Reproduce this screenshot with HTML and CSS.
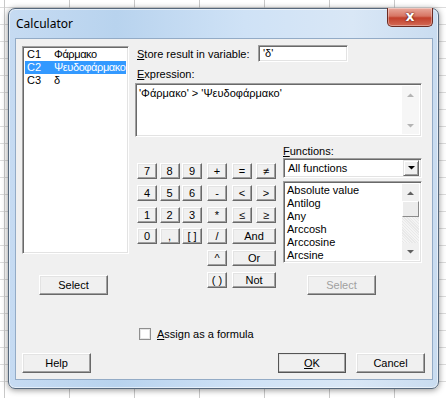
FILE: index.html
```html
<!DOCTYPE html>
<html lang="en">
  <head>
    <meta charset="utf-8">
    <title>Calculator</title>
    <link rel="stylesheet" href="styles.css">
  </head>
  <body>
    <div class="desk">
      <div class="window">
        <div class="titlebar">
          <span class="title">Calculator</span>
          <span class="close">x</span>
        </div>
        <div class="client">
          <div class="main">
            <div class="left">
              <div class="sunken varlist">
                <div class="row"><span class="col">C1</span>Φάρμακο</div>
                <div class="row sel"><span class="col">C2</span>Ψευδοφάρμακο</div>
                <div class="row"><span class="col">C3</span>δ</div>
              </div>
              <button class="btn select-var">Select</button>
            </div>
            <div class="right">
              <div class="store">
                <span class="store-label"><u>S</u>tore result in variable:</span>
                <div class="sunken field">'δ'</div>
              </div>
              <div class="label expr-label"><u>E</u>xpression:</div>
              <div class="sunken expr">
                <div class="expr-text">'Φάρμακο' &gt; 'Ψευδοφάρμακο'</div>
                <div class="vscroll off">
                  <span class="arrow"><svg width="7" height="4"><path d="M0 4L3.5 0.5L7 4Z"/></svg></span>
                  <span class="track"></span>
                  <span class="arrow"><svg width="7" height="4"><path d="M0 0L3.5 3.5L7 0Z"/></svg></span>
                </div>
              </div>
              <div class="lower">
                <div class="keypad">
                  <div class="digits">
                    <button class="btn key">7</button>
                    <button class="btn key">8</button>
                    <button class="btn key">9</button>
                    <button class="btn key">4</button>
                    <button class="btn key">5</button>
                    <button class="btn key">6</button>
                    <button class="btn key">1</button>
                    <button class="btn key">2</button>
                    <button class="btn key">3</button>
                    <button class="btn key">0</button>
                    <button class="btn key">,</button>
                    <button class="btn key">[ ]</button>
                  </div>
                  <div class="ops">
                    <button class="btn key">+</button>
                    <button class="btn key">-</button>
                    <button class="btn key">*</button>
                    <button class="btn key">/</button>
                    <button class="btn key">^</button>
                    <button class="btn key">( )</button>
                  </div>
                  <div class="logic">
                    <button class="btn key">=</button>
                    <button class="btn key">≠</button>
                    <button class="btn key">&lt;</button>
                    <button class="btn key">&gt;</button>
                    <button class="btn key">≤</button>
                    <button class="btn key">≥</button>
                    <button class="btn key wide">And</button>
                    <button class="btn key wide">Or</button>
                    <button class="btn key wide">Not</button>
                  </div>
                </div>
                <div class="functions">
                  <div class="label"><u>F</u>unctions:</div>
                  <div class="sunken combo">
                    <span class="combo-text">All functions</span>
                    <span class="drop"><svg width="7" height="4"><path d="M0 0L3.5 3.5L7 0Z"/></svg></span>
                  </div>
                  <div class="sunken funclist">
                    <div class="items">
                      <div>Absolute value</div>
                      <div>Antilog</div>
                      <div>Any</div>
                      <div>Arccosh</div>
                      <div>Arccosine</div>
                      <div>Arcsine</div>
                    </div>
                    <div class="vscroll">
                      <span class="arrow"><svg width="7" height="4"><path d="M0 4L3.5 0.5L7 4Z"/></svg></span>
                      <span class="thumb"></span>
                      <span class="track"></span>
                      <span class="arrow"><svg width="7" height="4"><path d="M0 0L3.5 3.5L7 0Z"/></svg></span>
                    </div>
                  </div>
                  <button class="btn select-fn" disabled>Select</button>
                </div>
              </div>
            </div>
          </div>
          <div class="assign">
            <span class="check"></span>
            <span><u>A</u>ssign as a formula</span>
          </div>
          <div class="actions">
            <button class="btn action">Help</button>
            <div class="pair">
              <button class="btn action default"><u>O</u>K</button>
              <button class="btn action">Cancel</button>
            </div>
          </div>
        </div>
      </div>
    </div>
  </body>
</html>
```

FILE: styles.css
```css
*, *::before, *::after {
  box-sizing: border-box;
}

html, body {
  margin: 0;
  padding: 0;
  height: 100%;
}

body {
  font-family: "Liberation Sans", Arial, sans-serif;
  font-size: 11px;
  color: #000;
  background-color: #fff;
  background-image:
    repeating-linear-gradient(90deg, transparent 0 4px, #c9c9c9 4px 5px, transparent 5px 65px),
    repeating-linear-gradient(0deg, transparent 0 16px, #dcdcdc 16px 17px);
}

button {
  font-family: inherit;
  font-size: 11px;
  color: inherit;
  margin: 0;
  padding: 0;
}

u {
  text-decoration: underline;
  text-underline-offset: 1px;
}

/* window frame */

.desk {
  padding: 8px 7px 9px 8px;
  height: 398px;
}

.window {
  width: 431px;
  height: 381px;
  display: flex;
  flex-direction: column;
  border: 1px solid #56687c;
  border-radius: 7px;
  background: linear-gradient(90deg, #c6dbf2 0%, #b8d3ee 25%, #cfe2f6 55%, #d9e7f6 80%, #c9dcf0 100%);
  box-shadow: 0 1px 6px rgba(0, 0, 0, 0.45), inset 0 0 0 1px rgba(255, 255, 255, 0.55);
}

.titlebar {
  height: 29px;
  flex-shrink: 0;
  display: flex;
  align-items: flex-start;
  padding-left: 7px;
}

.title {
  font-family: "Noto Sans", "Liberation Sans", sans-serif;
  font-size: 12px;
  line-height: 29px;
  color: #000;
}

.close {
  margin: -1px 5px 0 auto;
  width: 46px;
  height: 19px;
  border: 1px solid #6b2b22;
  border-top: 0;
  border-radius: 0 0 5px 5px;
  background: linear-gradient(180deg, #e9a99c 0%, #d77564 45%, #c2402c 55%, #d36a55 100%);
  box-shadow: inset 0 0 0 1px rgba(255, 255, 255, 0.35);
  color: #fff;
  font-family: "DejaVu Sans", sans-serif;
  font-weight: bold;
  font-size: 14px;
  line-height: 16px;
  text-align: center;
  text-shadow: 0 0 2px #5a1a12, 0 0 1px #5a1a12;
}

.client {
  flex: 1;
  margin: 0 5px 8px 6px;
  border: 1px solid #93abc6;
  background: #f0f0f0;
  padding: 6px 8px 0 6px;
}

/* 3d borders */

.sunken {
  background: #fff;
  border: 1px solid;
  border-color: #a0a0a0 #fff #fff #a0a0a0;
  box-shadow: inset 1px 1px #696969, inset -1px -1px #e3e3e3;
}

.btn {
  background: #f0f0f0;
  border: 1px solid;
  border-color: #fff #696969 #696969 #fff;
  box-shadow: inset -1px -1px #a0a0a0, inset 1px 1px #e3e3e3;
  text-align: center;
  line-height: 14px;
}

.btn:disabled {
  color: #a0a0a0;
}

/* layout */

.main {
  display: flex;
  align-items: flex-start;
}

.left {
  width: 107px;
  margin-top: 1px;
}

.varlist {
  height: 208px;
  padding: 1px 2px;
}

.varlist .row {
  height: 13px;
  line-height: 13px;
  padding-left: 2px;
  white-space: nowrap;
  overflow: hidden;
  letter-spacing: -0.4px;
}

.varlist .row.sel {
  background: #3399ff;
  color: #fff;
}

.varlist .col {
  display: inline-block;
  width: 27px;
  letter-spacing: 0;
}

.select-var {
  display: block;
  width: 69px;
  height: 20px;
  margin: 21px 0 0 17px;
}

.right {
  width: 287px;
  margin-left: 6px;
}

.store {
  display: flex;
  align-items: center;
  height: 17px;
}

.store-label {
  width: 123px;
  padding-left: 2px;
}

.field {
  width: 90px;
  height: 17px;
  line-height: 15px;
  padding-left: 4px;
}

.label {
  line-height: 14px;
}

.expr-label {
  margin: 5px 0 2px 2px;
}

.expr {
  height: 54px;
  display: flex;
}

.expr-text {
  flex: 1;
  padding: 3px 0 0 3px;
  line-height: 13px;
}

.vscroll {
  width: 17px;
  margin: 2px 2px 2px 0;
  display: flex;
  flex-direction: column;
  background: #f2f2f2;
}

.vscroll .arrow {
  height: 17px;
  display: flex;
  align-items: center;
  justify-content: center;
  fill: #606060;
}

.vscroll.off {
  background: #f6f6f6;
}

.vscroll.off .arrow {
  fill: #b4b4b4;
}

.vscroll .track {
  flex: 1;
}

.vscroll .thumb {
  height: 16px;
  background: #ececec;
  border: 1px solid;
  border-color: #fff #8a8a8a #8a8a8a #fff;
}

.lower {
  display: flex;
  align-items: flex-start;
}

.keypad {
  display: flex;
  align-items: flex-start;
  margin: 26px 0 0 2px;
  width: 139px;
}

.key {
  width: 20px;
  height: 16px;
}

.digits {
  display: grid;
  grid-template-columns: repeat(3, 20px);
  column-gap: 2.5px;
  row-gap: 5.8px;
}

.ops {
  display: grid;
  row-gap: 5.8px;
  margin-left: 5px;
}

.logic {
  display: grid;
  grid-template-columns: 20px 20px;
  column-gap: 4px;
  row-gap: 5.8px;
  margin-left: 5px;
}

.key.wide {
  grid-column: span 2;
  width: 44px;
}

.functions {
  width: 139px;
  margin: 7px 0 0 7px;
}

.functions .label {
  margin-bottom: 0;
}

.combo {
  height: 20px;
  display: flex;
  align-items: center;
  padding: 2px;
}

.combo-text {
  flex: 1;
  padding-left: 2px;
}

.drop {
  width: 16px;
  height: 16px;
  display: flex;
  align-items: center;
  justify-content: center;
  background: #f0f0f0;
  border: 1px solid;
  border-color: #e3e3e3 #696969 #696969 #e3e3e3;
  box-shadow: inset 1px 1px #fff, inset -1px -1px #a0a0a0;
  fill: #000;
}

.funclist {
  height: 82px;
  margin-top: 3px;
  display: flex;
}

.funclist .items {
  flex: 1;
  padding: 2px 0 0 3px;
  line-height: 13px;
}

.funclist .vscroll {
  background: repeating-linear-gradient(45deg, #f4f4f4 0 1px, #e8e8e8 1px 2px);
}

.funclist .vscroll .arrow {
  background: #f0f0f0;
}

.select-fn {
  display: block;
  width: 69px;
  height: 20px;
  margin: 12px 0 0 24px;
}

.assign {
  display: flex;
  align-items: center;
  margin: 32px 0 0 117px;
  height: 13px;
}

.check {
  width: 12px;
  height: 12px;
  margin-right: 6px;
  background: #fff;
  border: 1px solid #8f8f8f;
  box-shadow: inset 0 0 0 1px #e6e6e6;
}

.actions {
  display: flex;
  justify-content: space-between;
  margin: 13px -1px 0 0;
}

.pair {
  display: flex;
  gap: 10px;
}

.action {
  width: 69px;
  height: 20px;
}

.action.default {
  width: 68px;
  border-color: #fff #222 #222 #fff;
  outline: 1px solid #555;
  outline-offset: -1px;
}
```
